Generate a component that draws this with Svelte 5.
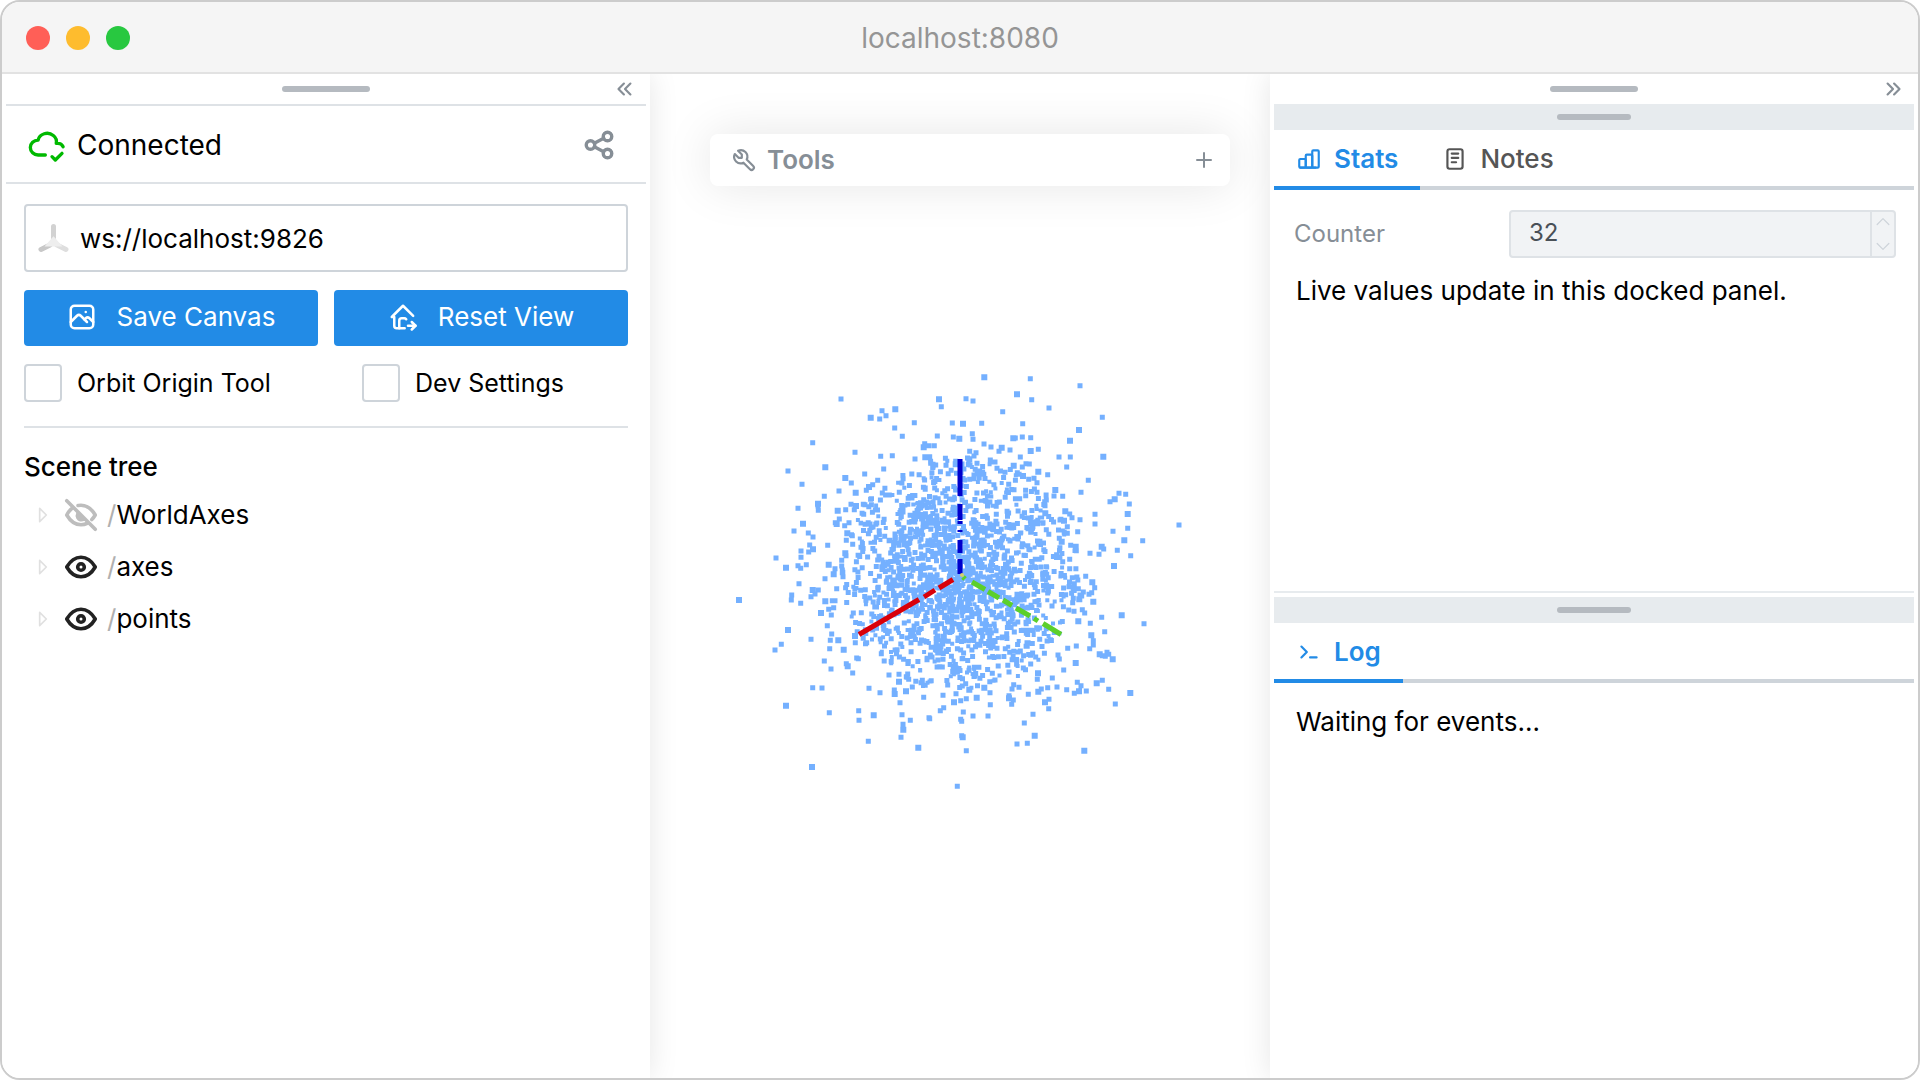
<script>
  const icons = {
    cloud: [
      'M11 18.004h-4.343c-2.572 -.004 -4.657 -2.011 -4.657 -4.487c0 -2.475 2.085 -4.482 4.657 -4.482c.393 -1.762 1.794 -3.2 3.675 -3.773c1.88 -.572 3.956 -.193 5.444 1c1.488 1.19 2.162 3.007 1.77 4.769h.99c1.388 0 2.585 .82 3.138 2.007',
      'M15 19l2 2l4 -4'
    ],
    share: [
      'M3 12a3 3 0 1 0 6 0a3 3 0 1 0 -6 0',
      'M15 6a3 3 0 1 0 6 0a3 3 0 1 0 -6 0',
      'M15 18a3 3 0 1 0 6 0a3 3 0 1 0 -6 0',
      'M8.7 10.7l6.6 -3.4',
      'M8.7 13.3l6.6 3.4'
    ],
    photo: [
      'M15 8h.01',
      'M3 6a3 3 0 0 1 3 -3h12a3 3 0 0 1 3 3v12a3 3 0 0 1 -3 3h-12a3 3 0 0 1 -3 -3v-12z',
      'M3 16l5 -5c.928 -.893 2.072 -.893 3 0l5 5',
      'M14 14l1 -1c.928 -.893 2.072 -.893 3 0l3 3'
    ],
    home: [
      'M9 21v-6a2 2 0 0 1 2 -2h2c.641 0 1.212 .302 1.578 .771',
      'M20.136 11.136l-8.136 -8.136l-9 9h2v7a2 2 0 0 0 2 2h6.344',
      'M19 22l3 -3l-3 -3',
      'M16 19h6'
    ],
    tool: ['M7 10h3v-3l-3.5 -3.5a6 6 0 0 1 8 8l6 6a2 2 0 0 1 -3 3l-6 -6a6 6 0 0 1 -8 -8l3.5 3.5'],
    plus: ['M12 5v14', 'M5 12h14'],
    bars: [
      'M3 13a1 1 0 0 1 1 -1h4a1 1 0 0 1 1 1v6a1 1 0 0 1 -1 1h-4a1 1 0 0 1 -1 -1z',
      'M15 5a1 1 0 0 1 1 -1h4a1 1 0 0 1 1 1v14a1 1 0 0 1 -1 1h-4a1 1 0 0 1 -1 -1z',
      'M9 9a1 1 0 0 1 1 -1h4a1 1 0 0 1 1 1v10a1 1 0 0 1 -1 1h-4a1 1 0 0 1 -1 -1z',
      'M4 20h14'
    ],
    notes: [
      'M5 5a2 2 0 0 1 2 -2h10a2 2 0 0 1 2 2v14a2 2 0 0 1 -2 2h-10a2 2 0 0 1 -2 -2z',
      'M9 7h6',
      'M9 11h6',
      'M9 15h4'
    ],
    prompt: ['M5 7l5 5l-5 5', 'M13 17h6'],
    left: ['M11 7l-5 5l5 5', 'M17 7l-5 5l5 5'],
    right: ['M7 7l5 5l-5 5', 'M13 7l5 5l-5 5'],
    up: ['M5 15l7 -7l7 7'],
    down: ['M5 9l7 7l7 -7'],
    caret: ['M8 4l8 8l-8 8z'],
    eye: [
      'M9.8 12a2.2 2.2 0 1 0 4.400 0a2.2 2.2 0 0 0 -4.400 0',
      'M21.500 12c-2.500 4.300 -5.700 6.500 -9.500 6.500s-7 -2.200 -9.500 -6.500c2.500 -4.300 5.700 -6.500 9.500 -6.500s7 2.200 9.500 6.500'
    ],
    eyeOff: [
      'M10 10.800l4 4c-1.800 .8 -3.400 .3 -4 -.8c-.5 -1 -.5 -2.200 0 -3.200',
      'M5.800 7.700c-1.200 1 -2.300 2.400 -3.300 4.300c2.500 4.300 5.700 6.500 9.500 6.500c1.500 0 2.900 -.3 4.100 -.9',
      'M10 5.700c.7 -.1 1.300 -.2 2 -.2c3.800 0 7 2.200 9.500 6.500c-.7 1.200 -1.500 2.200 -2.300 3',
      'M2.500 2.500L21.500 21.500'
    ]
  };

  const nodes = [
    { name: 'WorldAxes', visible: false },
    { name: 'axes', visible: true },
    { name: 'points', visible: true }
  ];

  let url = $state('ws://localhost:9826');
  let counter = $state(32);

  // Sparse outer points of the cloud, three units to the pixel.
  const outer = [
    793,82,931,86,1080,107,363,147,657,148,664,170,738,146,759,153,891,133,935,149,987,174,848,185,452,203,486,182,498,197,479,207,526,178,583,218,524,234,697,219,729,221,785,220,908,221,1147,202,1077,240,547,259,652,258,700,261,718,266,757,251,759,268,792,282,880,265,886,264,907,261,932,263,1050,272,278,278,405,307,614,281,611,292,627,287,643,287,813,291,845,293,837,304,870,300,901,321,932,303,955,298,1017,321,1051,321,1150,320,482,319,517,317,585,327,616,322,629,320,749,304,768,308,748,328,762,318,632,340,678,346,707,343,771,340,811,330,825,336,316,352,204,363,491,357,434,372,376,384,394,399,246,403,357,423,407,428,313,439,473,391,458,404,447,411,439,421,487,429,1040,351,955,365,983,374,1105,391,1083,427,1006,420,1028,439,1002,438,951,427,881,347,907,351,918,341,928,342,909,378,926,388,942,385,951,398,
    294,461,294,468,234,475,295,481,353,482,377,479,393,463,403,479,408,468,430,463,431,493,346,518,350,522,358,507,374,527,387,518,249,521,222,543,265,549,279,561,382,550,379,571,398,583,269,585,279,598,266,606,243,603,323,586,376,610,243,622,168,624,365,631,326,644,345,656,365,648,367,660,341,673,259,644,234,647,242,655,198,653,315,686,237,701,350,716,278,720,295,720,285,732,273,740,57,750,215,735,214,750,242,760,316,754,337,752,345,752,326,778,303,789,334,795,341,773,322,827,204,840,335,852,331,871,273,868,355,871,184,883,165,900,329,896,371,899,313,933,333,957,379,941,383,949,398,969,410,924,415,926,405,858,406,878,278,1013,306,1014,198,1067,328,1088,416,1082,417,1111,461,1096,447,1015,480,1028,523,1020,524,1032,540,1058,546,1094,549,1123,550,1139,543,1162,571,1111,445,1174,595,1193,627,1103,629,1106,611,1042,558,1024,577,1011,507,975,537,973,537,995,566,988,661,1082,671,1073,276,1251,712,1309,739,1202,725,1157,728,1162,722,1108,725,1114,730,1086,702,1057,722,1052,739,1046,759,1098,770,1043,804,1098,811,1064,810,1028,748,1019,669,1036,708,1031,737,1001,793,1013,825,990,
    891,1182,922,1180,944,1157,913,1119,939,1093,986,1076,1093,1202,875,1063,880,1050,867,1037,867,1045,876,1017,881,1004,897,1012,975,1057,987,1048,925,1033,964,1017,955,1025,983,1013,997,984,952,988,954,970,1011,1011,1040,1019,1063,1030,1077,1024,1083,1007,1072,997,1099,1023,1130,1000,1147,991,1166,1018,1186,1062,1231,1029,
    1377,525,1197,430,1217,433,1184,448,1170,455,1228,462,1125,493,1223,492,1125,522,1223,535,1179,544,1213,571,1268,572,1080,509,1073,545,1067,590,1069,602,1110,610,1137,613,1145,590,1151,597,1192,601,1232,617,1182,648,1049,628,1028,635,1097,679,1117,697,1124,713,1107,733,1115,728,1120,755,1087,779,1094,789,1145,802,1205,796,1272,821,1111,820,1154,845,1114,856,1120,872,1120,885,1109,896,1139,913,1147,917,1161,907,1166,913,1178,928,1156,919,1069,888,1043,895,1067,939,1031,960,1018,927,1014,915,1075,814,1058,758,1062,784,1046,780,1078,748,1085,738,1090,726,1047,710,1061,720,1075,716,1080,735,1060,745,1036,484,1049,492,1056,503,1020,510,1032,512,1042,530,1042,550,1018,565,1025,575,1052,586,974,455,975,467,976,490,968,520
  ];

  // The dense core is Gaussian, drawn from a seeded generator so it is stable.
  function buildCloud() {
    let seed = 20240611;
    const random = () => {
      seed = (seed * 1664525 + 1013904223) % 4294967296;
      return (seed + 1) / 4294967297;
    };
    const square = (x, y, s) => `M${(x - s / 2).toFixed(1)} ${(y - s / 2).toFixed(1)}h${s}v${s}h${-s}z`;
    let d = '';
    for (let i = 0; i < outer.length; i += 2) {
      d += square(outer[i] / 3, outer[i + 1] / 3, i % 8 === 0 ? 6 : 5);
    }
    let placed = 0;
    while (placed < 1620) {
      const r = Math.sqrt(-2 * Math.log(random())) * 66;
      const a = random() * Math.PI * 2;
      if (r > 118) continue;
      d += square(240 + r * Math.cos(a), 224 + r * Math.sin(a), placed % 4 === 0 ? 4 : 5);
      placed += 1;
    }
    return d;
  }

  const cloud = buildCloud();
</script>

{#snippet icon(name, kind)}
  <svg class="icon {kind}" viewBox="0 0 24 24" aria-hidden="true">
    {#each icons[name] as d}<path {d} />{/each}
  </svg>
{/snippet}

<div class="window">
  <header class="titlebar">
    <div class="lights"><i class="red"></i><i class="amber"></i><i class="green"></i></div>
    <div class="title">localhost:8080</div>
  </header>

  <main class="body">
    <aside class="panel">
      <div class="grip ruled">
        <span class="handle"></span>
        <button class="collapse" aria-label="Collapse left panel">{@render icon('left', 'i26')}</button>
      </div>
      <div class="status">
        {@render icon('cloud', 'i40 ok')}
        <span class="status-text">Connected</span>
        <button class="share" aria-label="Share">{@render icon('share', 'i34 bold')}</button>
      </div>
      <div class="controls">
        <label class="server">
          <svg class="logo" viewBox="0 0 32 34" aria-hidden="true">
            <path class="arm-up" d="M15.500 4.500V16" />
            <path class="arm-right" d="M19 23L28 27.500" />
            <path class="arm-left" d="M12 23L3 27.500" />
            <path class="hub" d="M15.500 18L19 22L15.500 22L12 22z" />
          </svg>
          <input type="text" aria-label="Server" bind:value={url} />
        </label>
        <div class="pair">
          <button class="primary">{@render icon('photo', 'i30')}Save Canvas</button>
          <button class="primary">{@render icon('home', 'i30')}Reset View</button>
        </div>
        <div class="checks">
          <label><input type="checkbox" />Orbit Origin Tool</label>
          <label><input type="checkbox" />Dev Settings</label>
        </div>
        <hr />
        <h2>Scene tree</h2>
        <ul class="tree">
          {#each nodes as node}
            <li>
              {@render icon('caret', 'i20 faint')}
              <button class:hidden={!node.visible} aria-label="Toggle {node.name}">
                {@render icon(node.visible ? 'eye' : 'eyeOff', 'i36 bold')}
              </button>
              <span class="slash">/</span><span>{node.name}</span>
            </li>
          {/each}
        </ul>
      </div>
    </aside>

    <section class="viewport">
      <div class="tools">
        {@render icon('tool', 'i26')}
        <span>Tools</span>
        <button aria-label="Expand tools">{@render icon('plus', 'i24')}</button>
      </div>
      <svg class="scene" viewBox="0 -4 480 460" role="img" aria-label="Point cloud with axes">
        <path class="cloud" d={cloud} />
        <path class="z" d="M240 109V146M240 154V170M240 171V174M240 180V182M240 190V203M240 209V224" />
        <path class="x" d="M139 284.500L199 249.500M204 247L215 240M219 238L233 229.500" />
        <path class="y" d="M243 227L245 229M252 232L265 239.500M268 241.500L279 248M283 250L292 255.500M296 258L310 266M314 268.500L318 271M323 273.500L341 284.500" />
        <circle class="origin" cx="242" cy="225" r="2" />
      </svg>
    </section>

    <aside class="panel">
      <div class="grip">
        <span class="handle"></span>
        <button class="collapse" aria-label="Collapse right panel">{@render icon('right', 'i26')}</button>
      </div>
      <section class="dock first">
        <div class="dock-grip"><span></span></div>
        <div class="tabs" role="tablist">
          <button role="tab" aria-selected="true">{@render icon('bars', 'i26')}Stats</button>
          <button role="tab" aria-selected="false">{@render icon('notes', 'i26')}Notes</button>
        </div>
        <div class="field">
          <label for="counter">Counter</label>
          <div class="number">
            <input id="counter" type="text" inputmode="numeric" readonly value={counter} />
            <div class="steps">
              <button aria-label="Increase" onclick={() => (counter += 1)}>{@render icon('up', 'i20 thin')}</button>
              <button aria-label="Decrease" onclick={() => (counter -= 1)}>{@render icon('down', 'i20 thin')}</button>
            </div>
          </div>
        </div>
        <p class="live">Live values update in this docked panel.</p>
      </section>
      <section class="dock second">
        <div class="dock-grip"><span></span></div>
        <div class="tabs" role="tablist">
          <button role="tab" aria-selected="true">{@render icon('prompt', 'i26')}Log</button>
        </div>
        <p class="log">Waiting for events...</p>
      </section>
    </aside>
  </main>
</div>

<style>
  :global(body) { background: #fff; }
  * { box-sizing: border-box; }
  button { border: 0; background: none; padding: 0; font: inherit; color: inherit; cursor: pointer; display: flex; align-items: center; justify-content: center; }
  input { font: inherit; color: inherit; margin: 0; }
  p, h2, ul { margin: 0; padding: 0; }

  .window { display: flex; flex-direction: column; min-height: 100vh; border: 2px solid #ccc; border-radius: 20px; overflow: hidden; background: #fff; font-family: Inter, sans-serif; font-size: 26px; line-height: 40px; color: #000; }

  .icon { display: block; flex: none; fill: none; stroke: currentColor; stroke-width: 2; stroke-linecap: round; stroke-linejoin: round; }
  .i20 { width: 20px; height: 20px; }
  .i24 { width: 24px; height: 24px; }
  .i26 { width: 26px; height: 26px; }
  .i30 { width: 30px; height: 30px; }
  .i34 { width: 34px; height: 34px; }
  .i36 { width: 36px; height: 36px; }
  .i40 { width: 40px; height: 40px; }
  .bold { stroke-width: 2.400; }
  .thin { stroke-width: 1.500; }
  .ok { color: #00b900; }
  .faint { color: #e0e0e0; }

  .titlebar { display: grid; grid-template-columns: 1fr auto 1fr; align-items: center; height: 72px; padding-top: 2px; border-bottom: 2px solid #e2e2e2; background: #f5f5f5; }
  .lights { display: flex; gap: 16px; padding-left: 24px; }
  .lights i { width: 24px; height: 24px; border-radius: 50%; }
  .red { background: #ff5f57; }
  .amber { background: #febc2e; }
  .green { background: #28c840; }
  .title { font-size: 28px; color: #959595; }

  .body { flex: 1; display: grid; grid-template-columns: minmax(0, 648fr) minmax(0, 620fr) minmax(0, 648fr); overflow: hidden; }
  .panel { display: flex; flex-direction: column; position: relative; z-index: 1; padding: 0 4px; background: #fff; box-shadow: 0 0 28px rgba(0, 0, 0, 0.1); }
  .grip { display: grid; grid-template-columns: 1fr auto 1fr; align-items: center; height: 30px; padding: 0 8px; }
  .handle { grid-column: 2; width: 88px; height: 6px; border-radius: 3px; background: #b5bac0; }
  .collapse { justify-self: end; color: #868e96; }
  .ruled { height: 32px; border-bottom: 2px solid #dee2e6; }

  .status { display: flex; align-items: center; gap: 10px; height: 78px; padding: 2px 30px 0 21px; border-bottom: 2px solid #dee2e6; }
  .status-text { flex: 1; font-size: 28px; }
  .share { color: #868e96; }

  .controls { display: flex; flex-direction: column; padding: 20px 18px 0; }
  .server { display: flex; align-items: center; gap: 10px; height: 68px; padding: 2px 12px 0; border: 2px solid #ced4da; border-radius: 4px; }
  .server input { flex: 1; min-width: 0; border: 0; padding: 0; outline: 0; background: none; }
  .logo { width: 32px; height: 34px; flex: none; fill: none; stroke-width: 5; stroke-linecap: round; }
  .arm-up { stroke: #d2d2d2; }
  .arm-right { stroke: #dedede; }
  .arm-left { stroke: #c8c8c8; }
  .hub { fill: #eee; stroke: #eee; }
  .pair { display: grid; grid-template-columns: 1fr 1fr; gap: 16px; margin-top: 18px; }
  .primary { gap: 20px; height: 56px; padding-bottom: 2px; border-radius: 4px; background: #228be6; color: #fff; }
  .checks { display: grid; grid-template-columns: 338fr 266fr; margin-top: 18px; font-size: 25px; }
  .checks label { display: flex; align-items: center; gap: 15px; height: 38px; }
  .checks input { appearance: none; width: 38px; height: 38px; border: 2px solid #ced4da; border-radius: 4px; background: #fff; }
  hr { width: 100%; height: 2px; margin: 24px 0 19px; border: 0; background: #dee2e6; }
  h2 { font-size: 26px; font-weight: 500; line-height: 40px; }
  .tree { list-style: none; margin-top: 2px; }
  .tree li { display: flex; align-items: center; height: 52px; padding-left: 9px; }
  .tree button { margin: 0 8px 0 10px; color: #222; }
  .tree button.hidden { color: #bdbdbd; }
  .slash { color: #b0b0b0; }

  .viewport { display: grid; grid-template: 1fr / 1fr; background: #fff; }
  .tools { grid-area: 1 / 1; align-self: start; display: flex; align-items: center; gap: 10px; height: 52px; margin: 60px 40px 0 60px; padding: 0 14px 0 21px; border-radius: 8px; background: #fff; box-shadow: 0 0 48px rgba(0, 0, 0, 0.1); color: #868e96; font-weight: 600; }
  .tools span { flex: 1; }
  .scene { grid-area: 1 / 1; place-self: center; width: 480px; max-width: 100%; }
  .cloud { fill: #74b0ff; }
  .x, .y, .z { fill: none; stroke-width: 5; }
  .x { stroke: #d90009; }
  .y { stroke: #5ccf2b; }
  .z { stroke: #0000cc; }
  .origin { fill: #d3cf6a; }

  .dock { display: flex; flex-direction: column; }
  .first { flex: 488 0 0; border-bottom: 2px solid #e7ebee; }
  .second { flex: 482 0 0; margin-top: 4px; }
  .dock-grip { display: flex; align-items: center; justify-content: center; height: 26px; background: #e7ebee; }
  .dock-grip span { width: 74px; height: 6px; border-radius: 3px; background: #b5bac0; }
  .tabs { display: flex; height: 60px; box-shadow: inset 0 -4px #ced4da; }
  .tabs button { gap: 12px; padding: 2px 22px 0; border-bottom: 4px solid transparent; color: #555; font-weight: 500; }
  .tabs button[aria-selected='true'] { border-color: #228be6; color: #228be6; font-weight: 600; }
  .field { display: grid; grid-template-columns: 215fr 387fr; align-items: center; padding: 20px 18px 0 20px; color: #868e96; }
  .field label { font-size: 24px; }
  .number { display: flex; height: 48px; border: 2px solid #dee2e6; border-radius: 4px; background: #f1f3f5; overflow: hidden; }
  .number input { flex: 1; min-width: 0; padding: 0 18px 2px; border: 0; background: none; outline: 0; font-size: 24px; color: #495057; }
  .steps { display: flex; flex-direction: column; justify-content: space-between; width: 24px; border-left: 2px solid #dee2e6; color: #ced4da; }
  .live { padding: 13px 22px 0; }
  .log { padding: 19px 22px 0; }
</style>
